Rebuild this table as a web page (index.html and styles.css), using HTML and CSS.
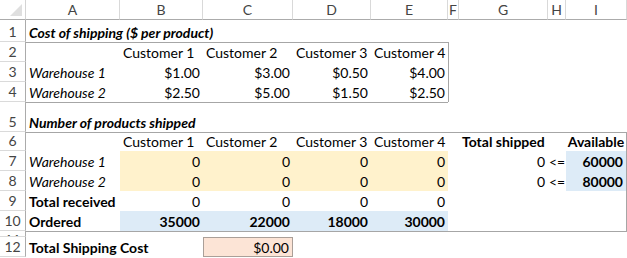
FILE: index.html
```html
<!DOCTYPE html>
<html lang="en">
<head>
  <meta charset="UTF-8">
  <title>Shipping cost model</title>
  <link rel="stylesheet" href="styles.css">
</head>
<body>
  <div class="sheet">
    <!-- column headers -->
    <div class="row head-row">
      <div class="corner"><span class="corner-mark"></span></div>
      <div class="col-head">A</div>
      <div class="col-head">B</div>
      <div class="col-head">C</div>
      <div class="col-head">D</div>
      <div class="col-head">E</div>
      <div class="col-head">F</div>
      <div class="col-head">G</div>
      <div class="col-head">H</div>
      <div class="col-head">I</div>
    </div>

    <div class="row r1">
      <div class="num">1</div>
      <div class="cell bi">Cost of shipping ($ per product)</div>
      <div class="cell"></div><div class="cell"></div><div class="cell"></div><div class="cell"></div>
      <div class="cell"></div><div class="cell"></div><div class="cell"></div><div class="cell"></div>
    </div>

    <div class="row">
      <div class="num">2</div>
      <div class="cell top"></div>
      <div class="cell top">Customer 1</div>
      <div class="cell top">Customer 2</div>
      <div class="cell top">Customer 3</div>
      <div class="cell top">Customer 4</div>
      <div class="cell left"></div><div class="cell"></div><div class="cell"></div><div class="cell"></div>
    </div>

    <div class="row">
      <div class="num">3</div>
      <div class="cell it">Warehouse 1</div>
      <div class="cell val">$1.00</div>
      <div class="cell val">$3.00</div>
      <div class="cell val">$0.50</div>
      <div class="cell val">$4.00</div>
      <div class="cell left"></div><div class="cell"></div><div class="cell"></div><div class="cell"></div>
    </div>

    <div class="row">
      <div class="num">4</div>
      <div class="cell it">Warehouse 2</div>
      <div class="cell val">$2.50</div>
      <div class="cell val">$5.00</div>
      <div class="cell val">$1.50</div>
      <div class="cell val">$2.50</div>
      <div class="cell left"></div><div class="cell"></div><div class="cell"></div><div class="cell"></div>
    </div>

    <div class="row r5">
      <div class="num">5</div>
      <div class="cell top bi">Number of products shipped</div>
      <div class="cell top"></div><div class="cell top"></div><div class="cell top"></div><div class="cell top"></div>
      <div class="cell"></div><div class="cell"></div><div class="cell"></div><div class="cell"></div>
    </div>

    <div class="row r6">
      <div class="num">6</div>
      <div class="cell top"></div>
      <div class="cell top">Customer 1</div>
      <div class="cell top">Customer 2</div>
      <div class="cell top">Customer 3</div>
      <div class="cell top">Customer 4</div>
      <div class="cell top"></div>
      <div class="cell top b">Total shipped</div>
      <div class="cell top"></div>
      <div class="cell top right b center">Available</div>
    </div>

    <div class="row">
      <div class="num">7</div>
      <div class="cell it">Warehouse 1</div>
      <div class="cell val input">0</div>
      <div class="cell val input">0</div>
      <div class="cell val input">0</div>
      <div class="cell val input">0</div>
      <div class="cell"></div>
      <div class="cell val">0</div>
      <div class="cell op">&lt;=</div>
      <div class="cell val b limit right">60000</div>
    </div>

    <div class="row">
      <div class="num">8</div>
      <div class="cell it">Warehouse 2</div>
      <div class="cell val input">0</div>
      <div class="cell val input">0</div>
      <div class="cell val input">0</div>
      <div class="cell val input">0</div>
      <div class="cell"></div>
      <div class="cell val">0</div>
      <div class="cell op">&lt;=</div>
      <div class="cell val b limit right">80000</div>
    </div>

    <div class="row">
      <div class="num">9</div>
      <div class="cell b">Total received</div>
      <div class="cell val">0</div>
      <div class="cell val">0</div>
      <div class="cell val">0</div>
      <div class="cell val">0</div>
      <div class="cell"></div><div class="cell"></div><div class="cell"></div>
      <div class="cell right"></div>
    </div>

    <div class="row">
      <div class="num">10</div>
      <div class="cell b">Ordered</div>
      <div class="cell val b limit">35000</div>
      <div class="cell val b limit">22000</div>
      <div class="cell val b limit">18000</div>
      <div class="cell val b limit">30000</div>
      <div class="cell"></div><div class="cell"></div><div class="cell"></div>
      <div class="cell right"></div>
    </div>

    <div class="row r11">
      <div class="num"><span class="sliver">11</span></div>
      <div class="cell top"></div><div class="cell top"></div><div class="cell top"></div><div class="cell top"></div>
      <div class="cell top"></div><div class="cell top"></div><div class="cell top"></div><div class="cell top"></div>
      <div class="cell top"></div>
    </div>

    <div class="row">
      <div class="num">12</div>
      <div class="cell b">Total Shipping Cost</div>
      <div class="cell"></div>
      <div class="cell val total">$0.00</div>
      <div class="cell"></div><div class="cell"></div><div class="cell"></div>
      <div class="cell"></div><div class="cell"></div><div class="cell"></div>
    </div>
  </div>
</body>
</html>
```

FILE: styles.css
```css
body {
  margin: 0;
  background: white;
  font-family: Lato, "Open Sans", sans-serif;
  font-size: 14px;
  color: #000;
  overflow: hidden;
}

.sheet {
  width: 627px;
}

.row {
  display: grid;
  grid-template-columns: 26px 94px 83px 90px 78px 77px 11px 89px 18px 61px;
  height: 20px;
}

.head-row { height: 20px; }
.r1 { height: 22px; }
.r5 { height: 30px; }
.r6 { height: 19px; }
.r11 { height: 6px; }

.row > div {
  box-sizing: border-box;
  min-width: 0;
}

/* header strip */
.corner {
  position: relative;
  border-right: 1px solid #d4d4d4;
  border-bottom: 1px solid #ababab;
}

.corner-mark {
  position: absolute;
  right: 3px;
  bottom: 3px;
  width: 0;
  height: 0;
  border-left: 12px solid transparent;
  border-bottom: 12px solid #dfdfdf;
}

.col-head {
  display: flex;
  align-items: center;
  justify-content: center;
  color: #444;
  font-size: 14px;
  border-right: 1px solid #d9d9d9;
  border-bottom: 1px solid #ababab;
}

.num {
  display: flex;
  align-items: flex-end;
  justify-content: center;
  color: #444;
  font-size: 14px;
  line-height: 18px;
  border-right: 1px solid #ababab;
  border-bottom: 1px solid #dadada;
  overflow: hidden;
}

.r11 .num {
  align-items: flex-start;
}

.sliver {
  display: block;
  height: 5px;
  margin-top: -14px;
  padding-top: 14px;
  line-height: 18px;
  overflow: hidden;
}

/* cells */
.cell {
  display: flex;
  align-items: flex-end;
  padding: 0 3px;
  white-space: nowrap;
  line-height: 18px;
}

.val { justify-content: flex-end; }
.center { justify-content: center; }
.op { padding: 0 0 0 1px; }

.b { font-weight: 700; }
.it { font-style: italic; }
.bi { font-weight: 700; font-style: italic; }

.top { border-top: 1px solid #a6a6a6; }
.left { border-left: 1px solid #a6a6a6; }
.right { border-right: 1px solid #a6a6a6; }

.input { background: #fff2cc; }
.limit { background: #ddebf7; }

.total {
  background: #fce4d6;
  border: 1px solid #aa9f98;
  line-height: 17px;
}
```
